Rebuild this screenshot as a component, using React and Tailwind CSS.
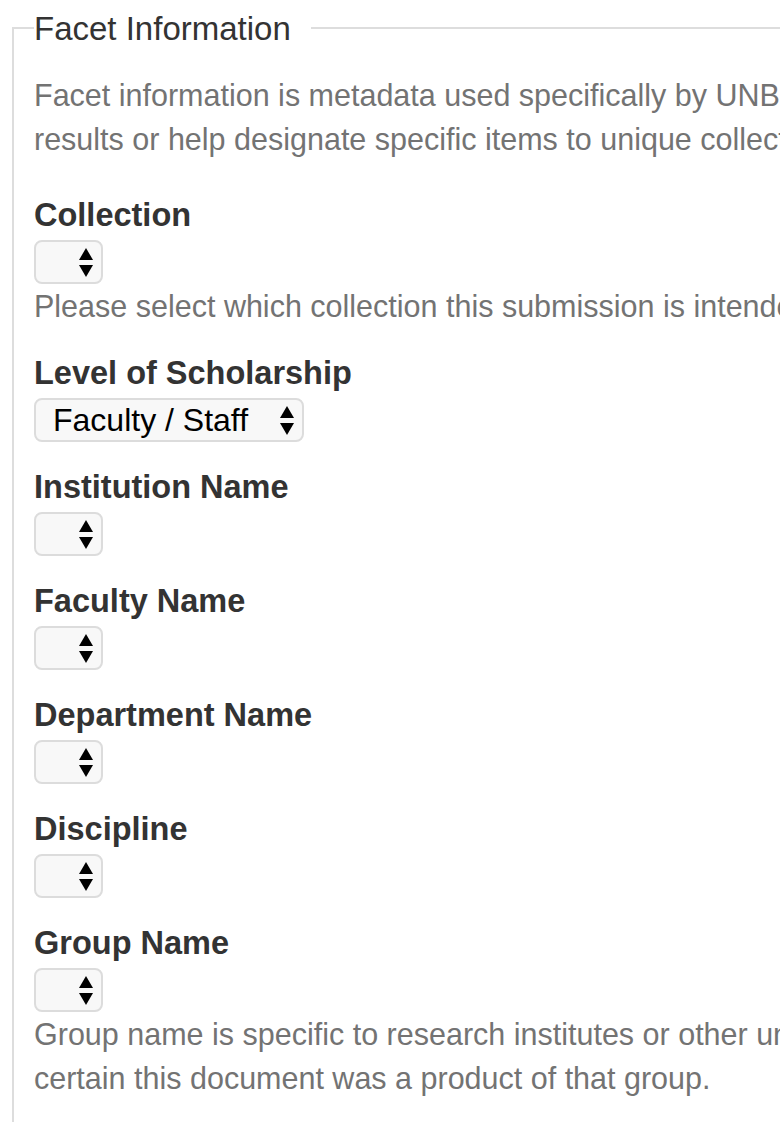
import React from "react";

const Arrows = () => (
  <svg width="14" height="29" viewBox="0 0 14 29" className="shrink-0">
    <path d="M7 0 L14 12 L0 12 Z" fill="#000" />
    <path d="M0 17 L14 17 L7 29 Z" fill="#000" />
  </svg>
);

const FakeSelect = ({ value, wide }) => (
  <div
    className={`flex h-[44px] items-center rounded-[8px] border-2 border-[#dcdcdc] bg-[#f8f8f8] text-[32px] text-black ${
      wide ? "w-[270px] justify-between pl-[17px] pr-[8px]" : "w-[69px] justify-end pr-[8px]"
    }`}
  >
    {value && <span className="leading-none">{value}</span>}
    <Arrows />
  </div>
);

const Field = ({ label, value, wide, help }) => (
  <div className="mb-[23px]">
    <div className="mb-[3px] text-[32.5px] font-bold leading-[44px] text-[#333]">{label}</div>
    <FakeSelect value={value} wide={wide} />
    {help && (
      <div className="text-[30.5px] leading-[44px] text-[#737373] whitespace-nowrap">
        {help.map((line, i) => (
          <div key={i}>{line}</div>
        ))}
      </div>
    )}
  </div>
);

export default function App() {
  return (
    <div
      className="h-[1122px] w-[780px] overflow-hidden bg-white pl-[12px] pt-[6px]"
      style={{ fontFamily: '"Liberation Sans", Arial, sans-serif' }}
    >
      <fieldset className="min-h-[1200px] w-[1200px] border-2 border-[#dddddd] pl-[20px]">
        <legend className="pr-[20px] pt-[2px] text-[33px] leading-[42px] text-[#333]">Facet Information</legend>
        <div className="mt-[23px] mb-[32px] whitespace-nowrap text-[30.5px] leading-[44px] text-[#737373]">
          <div>Facet information is metadata used specifically by UNB Scholar to help refine search</div>
          <div>results or help designate specific items to unique collections within the repository.</div>
        </div>

        <Field
          label="Collection"
          help={["Please select which collection this submission is intended for."]}
        />
        <Field label="Level of Scholarship" value="Faculty / Staff" wide />
        <Field label="Institution Name" />
        <Field label="Faculty Name" />
        <Field label="Department Name" />
        <Field label="Discipline" />
        <Field
          label="Group Name"
          help={[
            "Group name is specific to research institutes or other units. Only select a group if you are",
            "certain this document was a product of that group.",
          ]}
        />
      </fieldset>
    </div>
  );
}
